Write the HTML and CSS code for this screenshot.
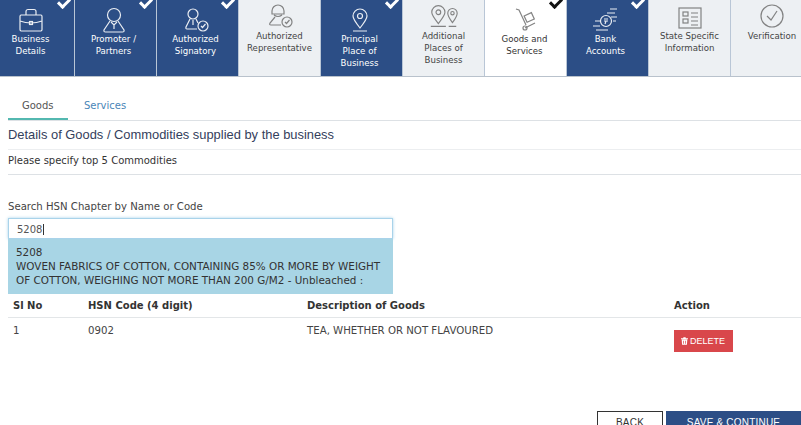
FILE: index.html
```html
<!DOCTYPE html>
<html lang="en">
<head>
<meta charset="utf-8">
<title>Goods and Services</title>
<link rel="stylesheet" href="styles.css">
</head>
<body>
<nav class="steps">
  <a class="step done"><svg class="icon" viewBox="0 0 26 26"><path d="M3 8h20a1.500 1.500 0 0 1 1 1.500v13a1.500 1.500 0 0 1-1 1.500H3a1.500 1.500 0 0 1-1-1.500v-13A1.500 1.500 0 0 1 3 8zM8 8V4.500a2 2 0 0 1 2-2h6a2 2 0 0 1 2 2V8M2 14q11 4 22 0"/><rect x="11.500" y="14.500" width="3" height="3"/></svg><span>Business<br>Details</span></a>
  <a class="step done"><svg class="icon" viewBox="0 0 26 26"><circle cx="13" cy="8" r="6.500"/><path d="M9 14L3 23q-.5 2 1.500 2h17q2 0 1.500-2l-6-9M10 15l3 3 3-3M13 18v4"/></svg><span>Promoter /<br>Partners</span></a>
  <a class="step done"><svg class="icon" viewBox="0 0 26 26"><circle cx="10" cy="7" r="5"/><path d="M7 12l-4 8q-.5 2 1 2h10M13 12l2 4M10 13v5"/><circle cx="20" cy="19" r="5"/><path d="M18 19l1.500 1.500 3-3.500"/></svg><span>Authorized<br>Signatory</span></a>
  <a class="step todo"><svg class="icon" viewBox="0 0 26 26"><path d="M5 8a6 6 0 0 1 12 0v3H5zM7 12q4 3 8 0M8 14l-5 6q-1 2 1 2h10"/><circle cx="20" cy="19" r="5"/><path d="M18 19l1.500 1.500 3-3.500"/></svg><span>Authorized<br>Representative</span></a>
  <a class="step done"><svg class="icon" viewBox="0 0 26 26"><path d="M13 21C9 16 6 12 6 9a7 7 0 0 1 14 0c0 3-3 7-7 12zM6 24h14"/><circle cx="13" cy="9" r="2.500"/></svg><span>Principal<br>Place of<br>Business</span></a>
  <a class="step todo"><svg class="icon wide" viewBox="0 0 34 26"><path d="M11 21C7 16 4 12 4 9a7 7 0 0 1 14 0c0 3-3 7-7 12zM3 24h16"/><circle cx="11" cy="9" r="2.500"/><path d="M26 20c-3-4-5-7-5-10a5 5 0 0 1 10 0c0 3-2 6-5 10zM22 24h8"/><circle cx="26" cy="10" r="1.800"/></svg><span>Additional<br>Places of<br>Business</span></a>
  <a class="step current"><svg class="icon" viewBox="0 0 26 26"><path d="M4 2l3 1 7 15M13 21l10-5"/><rect x="13" y="7" width="8" height="7" transform="rotate(-25 17 10)"/><circle cx="13" cy="21" r="2"/></svg><span>Goods and<br>Services</span></a>
  <a class="step done"><svg class="icon" viewBox="0 0 26 26"><circle cx="13" cy="14" r="5.500"/><path d="M11 12h4M11 14h4M13 14l-1 3M2 14h6M0 19h7M3 23h12M18 10h6M20 14h3M14 6h8M17 2h7"/></svg><span>Bank<br>Accounts</span></a>
  <a class="step todo"><svg class="icon" viewBox="0 0 26 26"><rect x="2" y="5" width="22" height="20"/><rect x="6" y="9" width="5" height="4"/><rect x="6" y="16" width="5" height="4"/><path d="M14 10h7M14 14h7M14 18h7M14 22h7"/></svg><span>State Specific<br>Information</span></a>
  <a class="step todo last"><svg class="icon" viewBox="0 0 26 26"><circle cx="13" cy="13" r="11"/><path d="M8 13l4 4 6-9"/></svg><span>Verification</span></a>
</nav>

<main class="content">
  <div class="tabs">
    <a class="tab active">Goods</a>
    <a class="tab">Services</a>
  </div>
  <h2 class="title">Details of Goods / Commodities supplied by the business</h2>
  <p class="note">Please specify top 5 Commodities</p>

  <label class="search-label" for="hsn">Search HSN Chapter by Name or Code</label>
  <div class="combo">
    <div class="search-input" id="hsn">5208<i class="caret"></i></div>
    <div class="suggestion">5208<br>WOVEN FABRICS OF COTTON, CONTAINING 85% OR MORE BY WEIGHT OF COTTON, WEIGHING NOT MORE THAN 200 G/M2 - Unbleached :</div>
  </div>

  <table class="goods">
    <thead>
      <tr><th class="c1">Sl No</th><th class="c2">HSN Code (4 digit)</th><th class="c3">Description of Goods</th><th>Action</th></tr>
    </thead>
    <tbody>
      <tr>
        <td>1</td><td>0902</td><td>TEA, WHETHER OR NOT FLAVOURED</td>
        <td><button class="delete"><svg class="trash" viewBox="0 0 10 11"><path d="M3.500 0h3l.5 1.500h3V3H0V1.500h3zM1 3.500h8l-.5 7.500h-7zM3 5v4.500h1V5zm3 0v4.500h1V5z"/></svg>DELETE</button></td>
      </tr>
    </tbody>
  </table>

  <div class="actions">
    <button class="btn back">BACK</button>
    <button class="btn save">SAVE &amp; CONTINUE</button>
  </div>
</main>
</body>
</html>
```

FILE: styles.css
```css
* { box-sizing: border-box; }
html, body { height: 425px; overflow: hidden; }
body {
  margin: 0;
  background: #fff;
  color: #333;
  font-family: "DejaVu Sans", Verdana, sans-serif;
  font-size: 10px;
}
.steps {
  display: flex;
  height: 77px;
  border-bottom: 1px solid #b9c2cc;
}
.step {
  position: relative;
  flex: 0 0 82px;
  display: flex;
  flex-direction: column;
  align-items: center;
  padding-top: 7px;
  text-align: center;
  font-size: 8.600px;
  line-height: 12px;
  border-right: 1px solid #b9c6d6;
}
.step:first-child { flex-basis: 75px; padding-right: 13px; }
.step.last { border-right: 0; }
.step.done { background: #2c4e86; color: #fff; }
.step.done:not(:first-child) { padding-right: 4px; }
.step.todo { background: #edf0f3; color: #444; padding-top: 3px; }
.step.current { color: #333; padding-right: 2px; }
.step.done::after, .step.current::after {
  content: "";
  position: absolute;
  top: -2px;
  right: 4px;
  width: 9px;
  height: 5px;
  border-left: 3px solid #fff;
  border-bottom: 3px solid #fff;
  transform: rotate(-45deg);
}
.step.current::after { border-color: #111; }
.icon {
  width: 26px;
  height: 26px;
  fill: none;
  stroke: currentColor;
  stroke-width: 1.200;
  opacity: .9;
}
.step.todo .icon { margin-bottom: 1px; }
.icon.wide { width: 32px; }
.step.todo .icon, .step.current .icon { color: #777; }
.content { padding: 0 0 0 8px; }
.tabs {
  display: flex;
  height: 44px;
  padding-top: 21px;
  border-bottom: 1px solid #dde1e5;
  font-size: 10px;
}
.tab {
  width: 60px;
  height: 22px;
  line-height: 15px;
  padding-left: 16px;
  color: #4a86b8;
}
.tab.active {
  color: #555;
  padding-left: 14px;
  border-bottom: 2px solid #53b8b0;
  height: 22px;
}
.title {
  margin: 0;
  height: 29px;
  padding-top: 5px;
  font: 400 12.900px/17px "Liberation Sans", Arial, sans-serif;
  color: #34405c;
  border-bottom: 1px solid #eceef0;
}
.note {
  margin: 0;
  height: 25px;
  padding-top: 4px;
  font-size: 10px;
  line-height: 14px;
  color: #333;
  border-bottom: 1px solid #dde1e5;
}
.search-label {
  display: block;
  margin-top: 24px;
  font-size: 10.150px;
  line-height: 15px;
  color: #444;
}
.combo { width: 385px; margin-top: 4px; }
.search-input {
  height: 21px;
  padding-left: 8px;
  border: 1px solid #a9d3ea;
  box-shadow: 0 0 3px #a9d3ea;
  font-size: 10px;
  line-height: 22px;
  color: #555;
}
.caret {
  display: inline-block;
  width: 1px;
  height: 11px;
  margin-left: 1px;
  vertical-align: -2px;
  background: #333;
}
.suggestion {
  height: 55px;
  padding: 6px 8px 0;
  background: #a8d5e5;
  font-size: 10.400px;
  line-height: 14px;
  color: #333;
}
.goods {
  width: 793px;
  border-collapse: collapse;
  font-size: 10px;
}
.goods th {
  height: 23px;
  padding: 0 0 0 5px;
  text-align: left;
  font-weight: 700;
  color: #333;
  border-bottom: 1px solid #e3e6e8;
}
.goods td {
  padding: 7px 0 0 5px;
  vertical-align: top;
  font-size: 10.200px;
  color: #444;
}
.c1 { width: 75px; }
.c2 { width: 219px; }
.c3 { width: 367px; }
.delete {
  display: flex;
  align-items: center;
  gap: 2px;
  height: 22px;
  width: 59px;
  margin-top: 5px;
  padding: 0 0 0 7px;
  border: 0;
  background: #d9474b;
  color: #fff;
  font: 400 9px "Liberation Sans", Arial, sans-serif;
}
.trash { width: 7px; height: 8px; fill: #fff; }
.actions {
  display: flex;
  justify-content: flex-end;
  gap: 3px;
  margin-top: 59px;
}
.btn {
  flex: none;
  height: 24px;
  padding: 0;
  font: 400 10px "Liberation Sans", Arial, sans-serif;
  letter-spacing: .2px;
}
.back { width: 66px; background: #fff; border: 1px solid #333; color: #333; }
.save { width: 135px; background: #2c4e86; border: 1px solid #2c4e86; color: #fff; }
```
